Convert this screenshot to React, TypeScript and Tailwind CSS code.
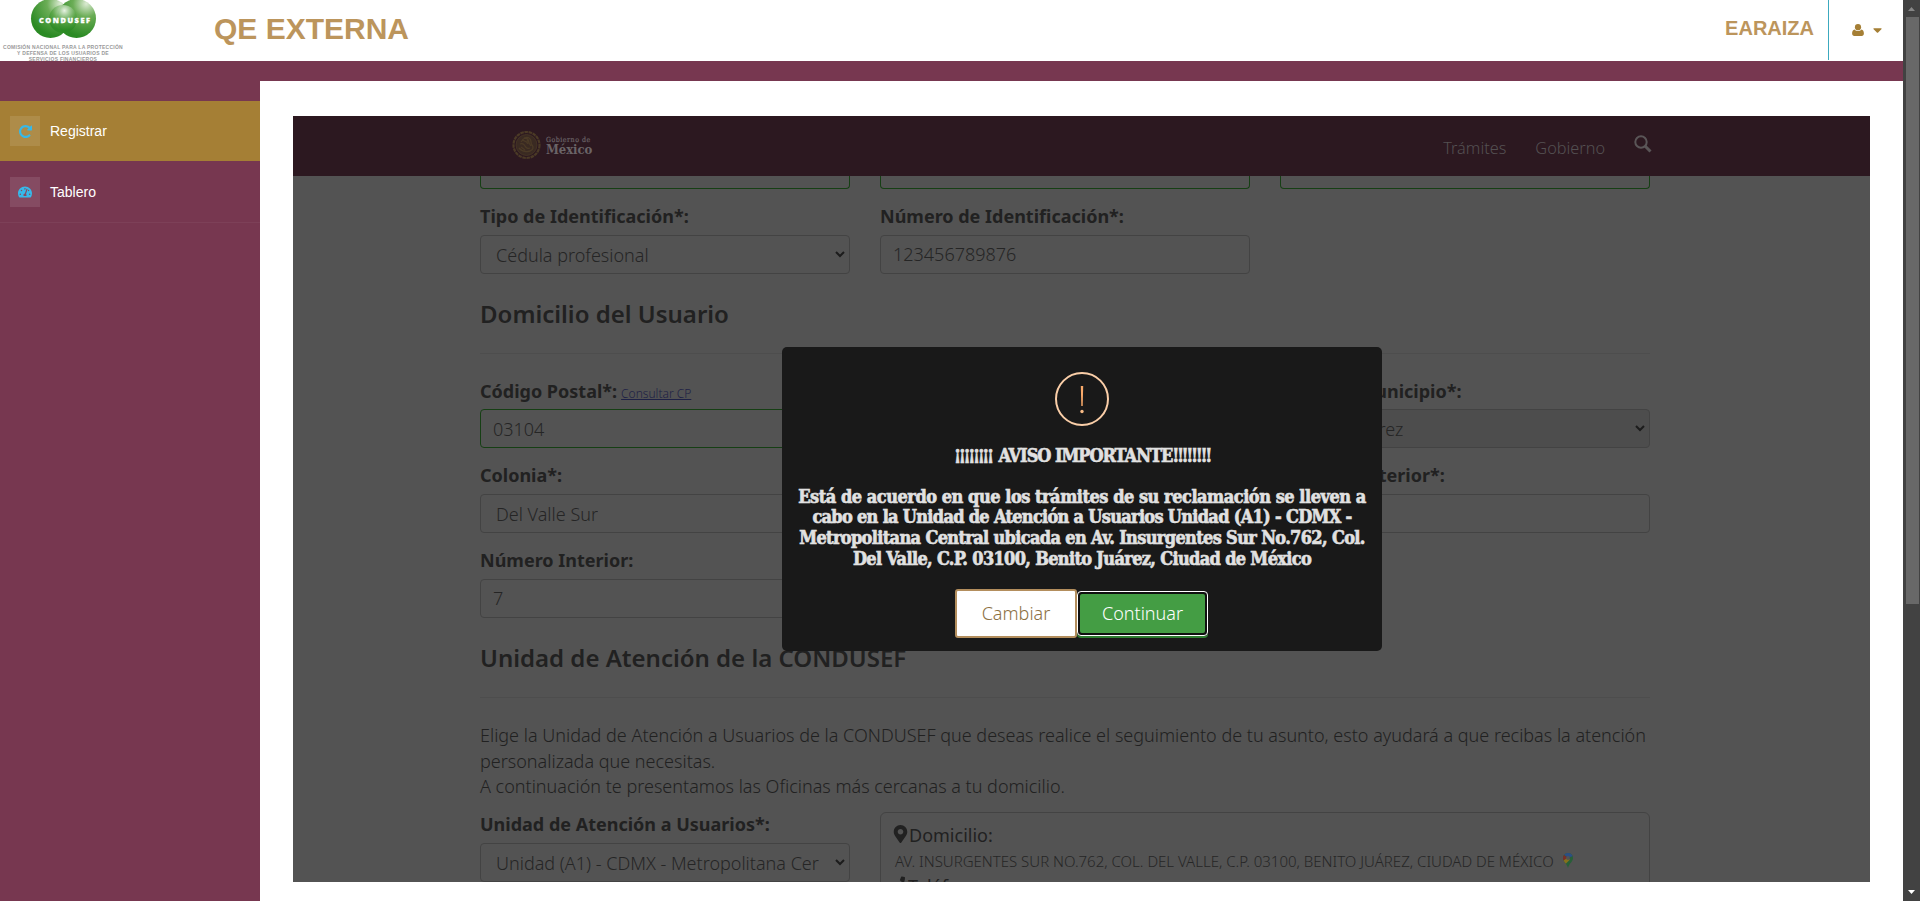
import React from "react";
import { FaCaretDown, FaMapMarkerAlt, FaPhoneAlt, FaTachometerAlt } from "react-icons/fa";

const noto = "font-['Noto_Sans',sans-serif]";

function Chevron() {
  return (
    <svg className="w-[10px] h-[7px] shrink-0" viewBox="0 0 10 7" fill="none" stroke="#1c1c1c" strokeWidth="2">
      <path d="M1 1l4 4 4-4" />
    </svg>
  );
}

function Field({ label, value, kind = "input", ok, muted, extra, gap = "mb-[5px]", pad = "" }: {
  label: string; value: string; kind?: "input" | "select"; ok?: boolean; muted?: boolean; extra?: React.ReactNode; gap?: string; pad?: string;
}) {
  return (
    <div className="w-[370px]">
      <div className={`h-[27px] leading-[27px] text-[18px] font-bold text-[#212121] whitespace-nowrap ${gap}`}>
        {label}
        {extra}
      </div>
      <div className={`flex h-[39px] items-center justify-between rounded-[4px] border text-[18px] font-light text-[#252525] whitespace-nowrap ${ok ? "border-[#163f14]" : "border-[#434343]"} ${muted ? "bg-[#4d4d4d]" : ""} ${kind === "select" ? "pl-[15px] pr-[4px]" : "pl-[12px]"}`}>
        <span className={`${pad} ${kind === "select" ? "max-w-[324px] overflow-hidden pt-px" : ""}`}>{value}</span>
        {kind === "select" && <Chevron />}
      </div>
    </div>
  );
}

function CondusefLogo() {
  return (
    <div className="w-[126px] h-[61px] overflow-hidden flex flex-col items-center">
      <svg width="66" height="39" viewBox="0 0 66 39" className="shrink-0">
        <defs>
          <radialGradient id="a" cx="0.75" cy="0.12" r="0.85"><stop offset="0" stopColor="#dcebd4" /><stop offset="0.4" stopColor="#6bad56" /><stop offset="1" stopColor="#2b8a24" /></radialGradient>
          <radialGradient id="b" cx="0.55" cy="0.2" r="0.7"><stop offset="0" stopColor="#e8f3e3" /><stop offset="0.6" stopColor="#5aa547" stopOpacity="0.8" /><stop offset="1" stopColor="#2b8a24" stopOpacity="0.8" /></radialGradient>
        </defs>
        <circle cx="20.500" cy="18.500" r="19.500" fill="url(#a)" />
        <circle cx="46.500" cy="18.500" r="19.500" fill="url(#a)" />
        <circle cx="33" cy="19" r="14" fill="url(#b)" />
        <text x="34.500" y="22.500" textAnchor="middle" fontFamily="Open Sans, sans-serif" fontWeight="800" fontSize="7.400" fill="#fff" stroke="#fff" strokeWidth=".3" textLength="51">CONDUSEF</text>
      </svg>
      <div className="mt-[5px] text-center font-['Liberation_Sans',sans-serif] text-[5px] leading-[6px] font-bold tracking-[0.26px] text-[#9a9a9a] whitespace-nowrap">
        <div>COMISIÓN NACIONAL PARA LA PROTECCIÓN</div>
        <div>Y DEFENSA DE LOS USUARIOS DE</div>
        <div>SERVICIOS FINANCIEROS</div>
      </div>
    </div>
  );
}

function Seal() {
  return (
    <svg width="29" height="30" viewBox="0 0 29 30" fill="none" stroke="#4b3a26">
      <circle cx="14.500" cy="15" r="13" strokeWidth="2.200" strokeDasharray="3.500 .7" />
      <circle cx="14.500" cy="15" r="10.500" fill="#3a2a22" strokeWidth=".7" />
      <path d="M9 12c3-5 7-6 9-3 2 2 0 4 2 6s1 5-2 6M8 14c2-1 4 0 5 2s3 3 5 2M10 10c2 1 5 1 6 4M7 18c3 4 10 5 14 1M12 8c3 0 5 2 5 5M9 17l4 3M15 10l4 6" strokeWidth="1.300" />
    </svg>
  );
}

function UserIcon() {
  return (
    <svg width="12" height="12" viewBox="0 0 12 12" fill="currentColor">
      <circle cx="6" cy="3.200" r="3.100" />
      <path d="M2.600 5.600C.9 6 .1 7.500.1 9.600.1 11 1 12 2.300 12h7.400c1.300 0 2.200-1 2.200-2.400 0-2.100-.8-3.600-2.500-4-.9 1-2 1.500-3.400 1.500S3.500 6.600 2.600 5.600z" />
    </svg>
  );
}

function RepeatIcon() {
  return (
    <svg width="13" height="13" viewBox="0 -1408 1536 1536" fill="#36b9ea">
      <path transform="scale(1,-1)" d="M1536 1280v-448q0-26-19-45t-45-19h-448q-42 0-59 40-17 39 14 69l138 138q-148 137-349 137-104 0-198.500-40.500t-163.500-109.500-109.500-163.500-40.500-198.500 40.500-198.500 109.500-163.500 163.500-109.500 198.500-40.500q119 0 225 52t179 147q7 10 23 12 15 0 25-9l137-138q9-8 9.500-20.500t-7.500-22.500q-109-132-264-204.500t-327-72.500q-156 0-298 61t-245 164-164 245-61 298 61 298 164 245 245 164 298 61q147 0 284.500-55.500t244.500-156.500l130 129q29 31 70 14 39-17 39-59z" />
    </svg>
  );
}

function MapPin() {
  return (
    <svg className="ml-[9px]" width="10" height="15" viewBox="0 0 10 15">
      <defs>
        <clipPath id="pin"><path d="M5 0a5 5 0 0 1 5 5c0 3.500-3.500 5-5 10C3.500 10 0 8.500 0 5a5 5 0 0 1 5-5z" /></clipPath>
      </defs>
      <g clipPath="url(#pin)">
        <path d="M0 0h10v15H0z" fill="#285f38" />
        <path d="M0 0h10v3L5 5 0 1z" fill="#2b4f85" />
        <path d="M0 1.200L5 5 0 8z" fill="#7a2e28" />
        <path d="M0 8l4-3 3 1.500L2.500 11z" fill="#86701c" />
      </g>
      <circle cx="5" cy="5" r="1.900" fill="#535353" />
    </svg>
  );
}

export default function App() {
  return (
    <div className="flex h-[901px] w-[1920px] overflow-hidden bg-white font-['Liberation_Sans',Arial,sans-serif]">
      <div className="flex w-[1903px] flex-col">
        <header className="flex h-[61px] items-start bg-white">
          <CondusefLogo />
          <h1 className="ml-[88px] mt-[9px] text-[30px] leading-[40px] font-bold text-[#bc955c]">QE EXTERNA</h1>
          <div className="ml-auto mr-[14px] mt-[13px] text-[20px] leading-[30px] font-bold text-[#bc955c]">EARAIZA</div>
          <div className="flex h-[60px] w-[75px] items-center border-l border-[#3caabf] pl-[23px] text-[#a57f35]">
            <UserIcon />
            <FaCaretDown className="ml-[7px] h-[14px] w-[13px]" />
          </div>
        </header>
        <div className="flex flex-1 bg-[#773750]">
          <aside className="w-[260px] pt-[40px] text-[14px] text-white">
            <div className="flex h-[60px] items-center gap-[10px] bg-[#a57f35] pl-[10px]">
              <div className="flex h-[30px] w-[30px] items-center justify-center bg-[#ae8c49]">
                <RepeatIcon />
              </div>
              <span>Registrar</span>
            </div>
            <div className="flex h-[62px] items-center gap-[10px] border-b border-[#7d4058] pl-[10px]">
              <div className="flex h-[30px] w-[30px] items-center justify-center bg-[#854b62]">
                <FaTachometerAlt className="h-[14px] w-[14px] text-[#36b9ea]" />
              </div>
              <span className="pt-px">Tablero</span>
            </div>
          </aside>
          <main className="mt-[20px] flex-1 bg-white pl-[33px] pt-[35px]">
            <div className={`relative h-[766px] w-[1577px] overflow-hidden bg-[#535353] ${noto}`}>
              <nav className="flex h-[60px] bg-[#2c1820] pl-[219px] text-[#545052]">
                <div className="mt-[14px]"><Seal /></div>
                <div className="ml-[5px] mt-[20px] font-['DejaVu_Serif_Condensed','DejaVu_Serif',serif]">
                  <div className="text-[7px] leading-[8px] tracking-[0.5px] text-[#6a6266] [-webkit-text-stroke:0.2px]">Gobierno de</div>
                  <div className="text-[13px] leading-[11px] font-bold tracking-[-0.1px] text-[#6a6467]">México</div>
                </div>
                <div className="ml-auto mr-[218px] flex text-[16.3px] font-light leading-[24px]">
                  <span className="mt-[20px]">Trámites</span>
                  <span className="ml-[29px] mt-[20px]">Gobierno</span>
                  <svg className="ml-[29px] mt-[19px]" width="18" height="18" viewBox="0 0 18 18" fill="none" stroke="#5a5557"><circle cx="7" cy="7" r="5.700" strokeWidth="2" /><path d="M11 11l5.500 5.500" strokeWidth="3" /></svg>
                </div>
              </nav>
              <div className="w-[1357px] pl-[187px]">
                <div className="mb-[14px] flex gap-[30px]">
                  {[0, 1, 2].map((i) => <div key={i} className="h-[13px] w-[370px] rounded-b-[4px] border border-t-0 border-[#163f14]" />)}
                </div>
                <div className="flex gap-[30px]">
                  <Field label="Tipo de Identificación*:" value="Cédula profesional" kind="select" />
                  <Field label="Número de Identificación*:" value="123456789876" />
                </div>
                <h2 className="mt-[22px] h-[58px] border-b border-[#4d4d4d] text-[24px] leading-[36px] font-semibold text-[#212121]">Domicilio del Usuario</h2>
                <div className="mt-[24px] flex gap-[30px]">
                  <Field label="Código Postal*:" value="03104" ok gap="mb-[4px]" pad="pt-[2px]" extra={<a className="ml-[4px] text-[12px] font-light text-[#1e2145] underline">Consultar CP</a>} />
                  <Field label="Estado*:" value="Ciudad de México" kind="select" muted gap="mb-[4px]" />
                  <Field label="Alcaldía/Municipio*:" value="Benito Juárez" kind="select" muted gap="mb-[4px]" />
                </div>
                <div className="mt-[14px] flex gap-[30px]">
                  <Field label="Colonia*:" value="Del Valle Sur" kind="select" />
                  <Field label="Calle*:" value="" />
                  <Field label="Número Exterior*:" value="" />
                </div>
                <div className="mt-[14px]"><Field label="Número Interior:" value="7" /></div>
                <h2 className="mt-[22px] h-[58px] border-b border-[#4d4d4d] text-[24px] leading-[36px] font-semibold text-[#212121]">Unidad de Atención de la CONDUSEF</h2>
                <p className="mt-[25px] text-[18px] font-light leading-[25.5px] text-[#212121] whitespace-nowrap">
                  Elige la Unidad de Atención a Usuarios de la CONDUSEF que deseas realice el seguimiento de tu asunto, esto ayudará a que recibas la atención<br />personalizada que necesitas.<br />A continuación te presentamos las Oficinas más cercanas a tu domicilio.
                </p>
                <div className="mt-[11.6px] flex gap-[30px]">
                  <Field label="Unidad de Atención a Usuarios*:" value="Unidad (A1) - CDMX - Metropolitana Cer" kind="select" />
                  <div className="mt-px h-[120px] w-[770px] rounded-[6px] border border-[#434343] pl-[11px] pt-[9px] text-[18px] text-[#212121]">
                    <div className="flex h-[26px] items-center leading-[26px]"><FaMapMarkerAlt className="mb-[3px] h-[18px] w-[17px]" />Domicilio:</div>
                    <div className="flex h-[25px] items-center pl-[3px] text-[15px] font-light leading-[24px] text-[#262626]">
                      <span>AV. INSURGENTES SUR NO.762, COL. DEL VALLE, C.P. 03100, BENITO JUÁREZ, CIUDAD DE MÉXICO</span>
                      <MapPin />
                    </div>
                    <div className="flex h-[26px] items-center leading-[26px]"><FaPhoneAlt className="mr-[3px] mb-[6px] h-[14px] w-[13px] -scale-x-100" />Teléfono:</div>
                  </div>
                </div>
              </div>
              <div role="dialog" className="absolute left-[489px] top-[231px] flex h-[304px] w-[600px] flex-col items-center rounded-[5px] bg-[#191919]">
                <svg className="mt-[25px]" width="54" height="54" viewBox="0 0 54 54" fill="none"><circle cx="27" cy="27" r="26" stroke="#facea8" strokeWidth="2" /><path d="M25.800 14h2.400l-.5 20h-1.400z" fill="#f8a96a" /><circle cx="27" cy="39.500" r="1.700" fill="#f8bb86" /></svg>
                <div className="mt-[20px] text-center font-['DejaVu_Serif_Condensed','DejaVu_Serif',serif] text-[18px] font-bold leading-[20.7px] text-[#e1e1e1] whitespace-nowrap [-webkit-text-stroke:0.6px_#e1e1e1]">
                  <div className="tracking-[-1.05px]"><span className="relative -top-[2px] tracking-[-2.4px]">¡¡¡¡¡¡¡¡</span><span className="ml-[2px]"> AVISO IMPORTANTE</span><span className="tracking-[-2.4px]">!!!!!!!!</span></div>
                  <div className="mt-[20px] tracking-[-0.47px]">Está de acuerdo en que los trámites de su reclamación se lleven a</div>
                  <div className="tracking-[-0.7px]">cabo en la Unidad de Atención a Usuarios Unidad (A1) - CDMX -</div>
                  <div className="tracking-[-0.65px]">Metropolitana Central ubicada en Av. Insurgentes Sur No.762, Col.</div>
                  <div className="tracking-[-0.67px]">Del Valle, C.P. 03100, Benito Juárez, Ciudad de México</div>
                </div>
                <div className="mt-auto mr-px mb-[13px] flex h-[49px] text-[18px] font-light">
                  <button className="w-[122px] rounded-[3px] border-2 border-[#b38e5d] bg-white text-[#8c7042]">Cambiar</button>
                  <button className="w-[131px] rounded-[4px] bg-[#2f7d31] pb-[2px]">
                    <span className="flex h-full flex-col bg-[#191919] pt-[2px] rounded-b-[4px]">
                      <span className="flex flex-1 rounded-[4px] border border-white bg-[#101010] p-[2px]">
                        <span className="flex flex-1 items-center justify-center rounded-[2px] bg-[#449d44] text-white">Continuar</span>
                      </span>
                    </span>
                  </button>
                </div>
              </div>
            </div>
          </main>
        </div>
      </div>
      <div className="flex w-[17px] flex-col items-center bg-[#424242]">
        <svg className="mt-[7px] h-[4px] w-[7px]" viewBox="0 0 7 4"><path d="M0 4l3.500-4L7 4z" fill="#868686" /></svg>
        <div className="ml-px mt-[6px] h-[587px] w-[13px] bg-[#686868]" />
        <svg className="mt-auto mb-[7px] h-[4px] w-[7px]" viewBox="0 0 7 4"><path d="M0 0h7L3.500 4z" fill="#fff" /></svg>
      </div>
    </div>
  );
}
